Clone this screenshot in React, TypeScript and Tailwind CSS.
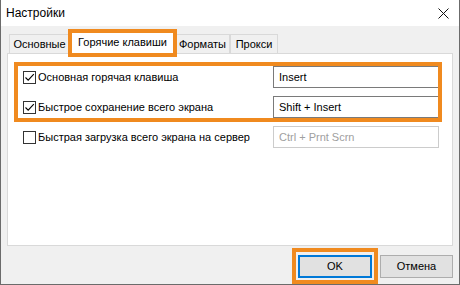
import { useState } from "react";

const FONT = { fontFamily: '"Liberation Sans", Arial, sans-serif' };

function CheckBox({ checked }: { checked: boolean }) {
  return (
    <span className="flex h-[13px] w-[13px] shrink-0 items-center justify-center border border-[#333333] bg-white">
      {checked && (
        <svg width="11" height="11" viewBox="0 0 11 11" fill="none">
          <path d="M1.5 5.5 L4.2 8.2 L9.8 2.2" stroke="#000" strokeWidth="1.1" />
        </svg>
      )}
    </span>
  );
}

function HotkeyRow({
  label,
  value,
  checked,
  disabled,
}: {
  label: string;
  value: string;
  checked: boolean;
  disabled?: boolean;
}) {
  return (
    <div className="flex h-[22px] items-center">
      <CheckBox checked={checked} />
      <span className="ml-[2px] flex-1 text-[11px] text-black">{label}</span>
      <div
        className={
          disabled
            ? "flex h-[22px] w-[166px] items-center border border-[#cccccc] bg-white pl-[5px] text-[11px] text-[#a0a0a0]"
            : "flex h-[22px] w-[166px] items-center border border-[#7a7a7a] bg-white pl-[5px] text-[11px] text-black"
        }
      >
        {value}
      </div>
    </div>
  );
}

export default function App() {
  const [tab] = useState("hotkeys");
  const tabs = [
    { id: "main", label: "Основные", w: "w-[61px]" },
    { id: "hotkeys", label: "Горячие клавиши", w: "w-[105px]" },
    { id: "formats", label: "Форматы", w: "w-[55px]" },
    { id: "proxy", label: "Прокси", w: "w-[48px]" },
  ];

  return (
    <div
      style={FONT}
      className="flex h-[285px] w-[460px] flex-col overflow-hidden border-x border-b border-[#6b6b6b] bg-[#f0f0f0]"
    >
      {/* title bar */}
      <div className="flex h-[26px] shrink-0 items-center justify-between bg-white pl-[5px] pr-[9px]">
        <span className="text-[12px] text-black">Настройки</span>
        <svg width="11" height="11" viewBox="0 0 11 11" className="mr-[1px]">
          <path d="M0.5 0.5 L10.5 10.5 M10.5 0.5 L0.5 10.5" stroke="#111" strokeWidth="1" />
        </svg>
      </div>

      <div className="flex flex-1 flex-col px-[6px] pt-[5px]">
        {/* tabs */}
        <div className="relative z-10 flex h-[22px] items-end pl-[2px]">
          {tabs.map((t) =>
            t.id === tab ? (
              <div
                key={t.id}
                className={`relative mb-[-1px] flex h-[23px] ${t.w} items-center justify-center border-x border-t border-[#d9d9d9] bg-white pb-[1px] text-[11px] text-black`}
              >
                {t.label}
                <div className="pointer-events-none absolute -bottom-[3px] -left-[3px] -right-[3px] -top-[3px] border-[4px] border-[#f08a1f]" />
              </div>
            ) : (
              <div
                key={t.id}
                className={`flex h-[19px] ${t.w} items-center justify-center border-x border-t border-[#d9d9d9] bg-[#f0f0f0] text-[11px] text-black`}
              >
                {t.label}
              </div>
            )
          )}
        </div>

        {/* panel */}
        <div className="relative h-[193px] shrink-0 border border-[#d9d9d9] bg-white">
          <div className="relative flex flex-col gap-[8px] pl-[15px] pr-[13px] pt-[12px]">
            <HotkeyRow label="Основная горячая клавиша" value="Insert" checked />
            <HotkeyRow label="Быстрое сохранение всего экрана" value="Shift + Insert" checked />
            <HotkeyRow
              label="Быстрая загрузка всего экрана на сервер"
              value="Ctrl + Prnt Scrn"
              checked={false}
              disabled
            />
            <div className="pointer-events-none absolute left-[6px] top-[8px] h-[60px] w-[428px] border-[4px] border-[#f08a1f]" />
          </div>
        </div>

        {/* buttons */}
        <div className="flex justify-end gap-[8px] pt-[9px]">
          <div className="relative">
            <button className="flex h-[23px] w-[74px] items-center justify-center border-2 border-[#0078d7] bg-[#e1e1e1] text-[11px] text-black">
              OK
            </button>
            <div className="pointer-events-none absolute -bottom-[6px] -left-[6px] -right-[6px] -top-[7px] border-[4px] border-[#f08a1f]" />
          </div>
          <button className="flex h-[23px] w-[73px] items-center justify-center border border-[#adadad] bg-[#e1e1e1] text-[11px] text-black">
            Отмена
          </button>
        </div>
      </div>
    </div>
  );
}
